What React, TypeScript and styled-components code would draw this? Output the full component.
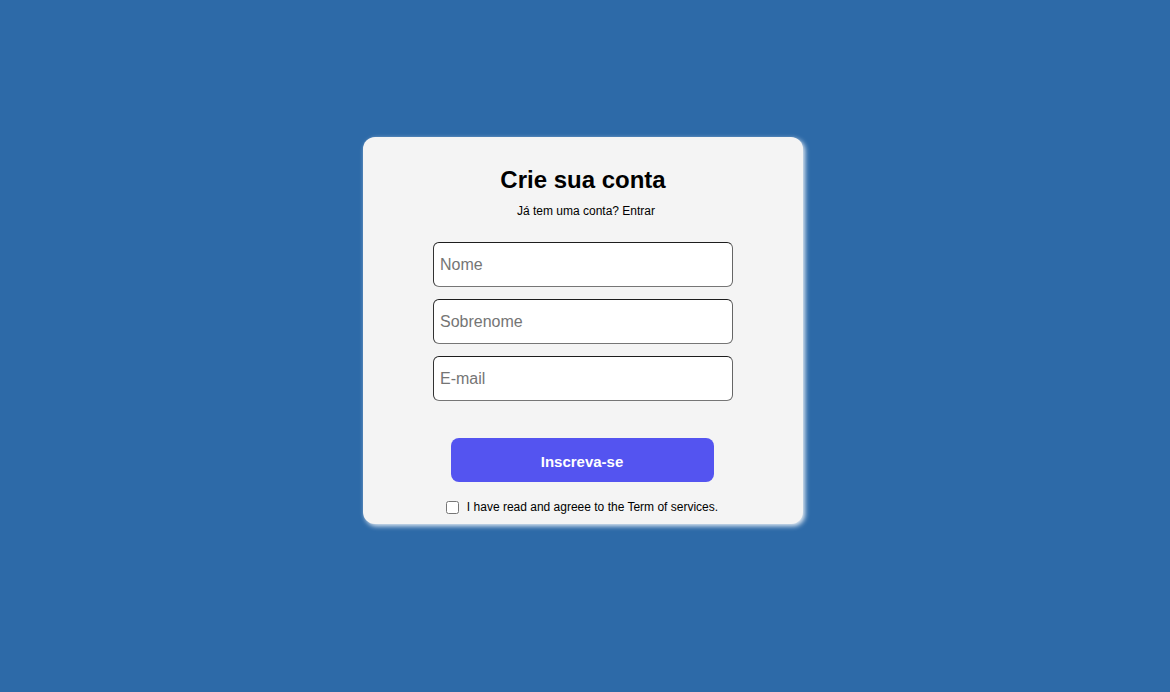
import React from "react";
import styled, { createGlobalStyle } from "styled-components";

const Global = createGlobalStyle`
  html, body { margin: 0; padding: 0; }
  body {
    background: #2d6aa8;
    font-family: "Liberation Sans", Arial, sans-serif;
    min-height: 692px;
  }
`;

const Page = styled.main`
  display: flex;
  justify-content: center;
  align-items: flex-start;
  padding: 137px 4px 0 0;
`;

const Card = styled.section`
  width: 440px;
  box-sizing: border-box;
  background: #f4f4f4;
  border-radius: 12px;
  box-shadow: 2px 2px 5px rgba(255, 255, 255, 0.9);
  padding: 29px 0 10px;
  display: flex;
  flex-direction: column;
  align-items: center;
`;

const Title = styled.h1`
  margin: 0;
  font-size: 24px;
  line-height: 28px;
  font-weight: 700;
  color: #000;
`;

const Subtitle = styled.p`
  margin: 10px 0 0;
  padding-left: 6px;
  font-size: 12px;
  line-height: 14px;
  color: #000;
`;

const Fields = styled.div`
  margin-top: 24px;
  display: flex;
  flex-direction: column;
  gap: 12px;
`;

const Input = styled.input`
  width: 300px;
  height: 45px;
  box-sizing: border-box;
  padding: 0 6px;
  border: 1px solid;
  border-color: #1e1e1e #666 #767676 #333;
  border-radius: 6px;
  background: #fff;
  font-family: "Liberation Sans", Arial, sans-serif;
  font-size: 16px;
  color: #000;
  outline: none;
  &::placeholder { color: #757575; }
`;

const Button = styled.button`
  margin: 37px 2px 0 0;
  width: 263px;
  height: 44px;
  padding: 2px 0 0;
  border: none;
  border-radius: 8px;
  background: #5454f0;
  color: #fff;
  font-family: "Liberation Sans", Arial, sans-serif;
  font-weight: 700;
  font-size: 15px;
  cursor: pointer;
`;

const Terms = styled.label`
  margin-top: 18px;
  padding-right: 2px;
  display: flex;
  align-items: center;
  gap: 8px;
  font-size: 12px;
  line-height: 14px;
  color: #000;
`;

const Check = styled.input`
  margin: 0;
  width: 13px;
  height: 13px;
`;

export default function App() {
  return (
    <>
      <Global />
      <Page>
        <Card>
          <Title>Crie sua conta</Title>
          <Subtitle>Já tem uma conta? Entrar</Subtitle>
          <Fields>
            <Input type="text" placeholder="Nome" />
            <Input type="text" placeholder="Sobrenome" />
            <Input type="email" placeholder="E-mail" />
          </Fields>
          <Button type="button">Inscreva-se</Button>
          <Terms>
            <Check type="checkbox" />
            I have read and agreee to the Term of services.
          </Terms>
        </Card>
      </Page>
    </>
  );
}
